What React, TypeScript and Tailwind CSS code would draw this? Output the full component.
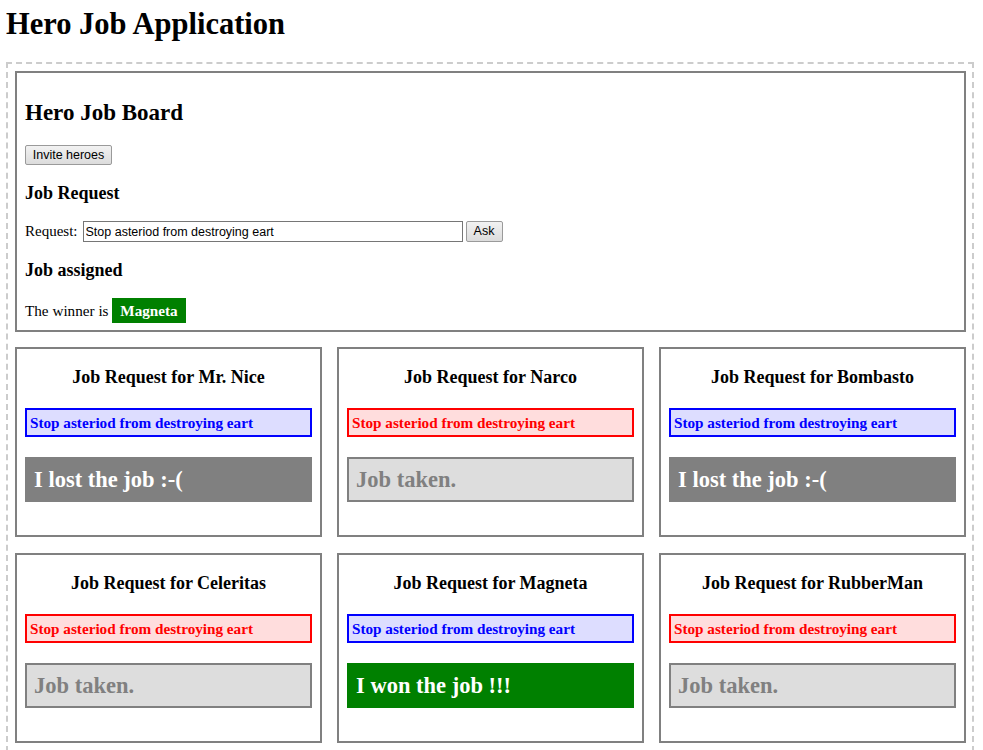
import React from "react";

type Hero = { name: string; lead: boolean; outcome: "lost" | "taken" | "won" };

const heroes: Hero[] = [
  { name: "Mr. Nice", lead: true, outcome: "lost" },
  { name: "Narco", lead: false, outcome: "taken" },
  { name: "Bombasto", lead: true, outcome: "lost" },
  { name: "Celeritas", lead: false, outcome: "taken" },
  { name: "Magneta", lead: true, outcome: "won" },
  { name: "RubberMan", lead: false, outcome: "taken" },
];

const REQ = "Stop asteriod from destroying eart";

function Card({ hero }: { hero: Hero }) {
  return (
    <div className="h-[190px] border-2 border-[#808080] px-[8px] pt-[8px]">
      <h3 className="mt-[10px] text-center text-[18px] font-bold leading-[20px]">
        Job Request for {hero.name}
      </h3>
      {hero.lead ? (
        <div className="mt-[21px] h-[29px] border-2 border-[#0000ff] bg-[#ddddff] pl-[3px] text-[15.2px] font-bold leading-[25px] text-[#0000ff]">
          {REQ}
        </div>
      ) : (
        <div className="mt-[21px] h-[29px] border-2 border-[#ff0000] bg-[#ffdddd] pl-[3px] text-[15.2px] font-bold leading-[25px] text-[#ff0000]">
          {REQ}
        </div>
      )}
      {hero.outcome === "lost" && (
        <div className="mt-[20px] h-[45px] bg-[#808080] pl-[9px] text-[22.5px] font-bold leading-[46px] text-white">
          I lost the job :-(
        </div>
      )}
      {hero.outcome === "won" && (
        <div className="mt-[20px] h-[45px] bg-[#008000] pl-[9px] text-[22.5px] font-bold leading-[46px] text-white">
          I won the job !!!
        </div>
      )}
      {hero.outcome === "taken" && (
        <div className="mt-[20px] h-[45px] border-2 border-[#808080] bg-[#dddddd] pl-[7px] text-[22.5px] font-bold leading-[42px] text-[#808080]">
          Job taken.
        </div>
      )}
    </div>
  );
}

export default function App() {
  return (
    <div className="min-h-screen bg-white font-['Liberation_Serif','Times_New_Roman',serif] text-black">
      <h1 className="ml-[6px] pt-[7px] text-[30.5px] font-bold leading-[34px]">Hero Job Application</h1>
      <div className="ml-[6px] mt-[21px] w-[968px] border-2 border-dashed border-[#cccccc] pb-[7px] pl-[7px] pr-[6px] pt-[7px]">
        <div className="border-2 border-[#808080] px-[8px] pb-[7px] pt-[8px]">
          <h2 className="mt-[19px] text-[23px] font-bold leading-[26px]">Hero Job Board</h2>
          <button className="mt-[19px] block h-[20px] w-[87px] rounded-[2px] border border-[#9a9a9a] bg-gradient-to-b from-[#f2f2f2] to-[#dcdcdc] p-0 font-['Liberation_Sans',Arial,sans-serif] text-[12.5px] leading-[18px] text-black">
            Invite heroes
          </button>
          <h3 className="mt-[18px] text-[18px] font-bold leading-[20px]">Job Request</h3>
          <div className="mt-[18px] flex h-[21px] items-center text-[15px]">
            <span className="mr-[5px] leading-[17px]">Request:</span>
            <input
              readOnly
              value={REQ}
              className="h-[21px] w-[380px] border border-[#767676] bg-white px-[2px] font-['Liberation_Sans',Arial,sans-serif] text-[12.5px] text-black outline-none"
            />
            <button className="ml-[3px] h-[21px] w-[37px] rounded-[2px] border border-[#9a9a9a] bg-gradient-to-b from-[#f2f2f2] to-[#dcdcdc] p-0 font-['Liberation_Sans',Arial,sans-serif] text-[12.5px] leading-[19px] text-black">
              Ask
            </button>
          </div>
          <h3 className="mt-[18px] text-[18px] font-bold leading-[20px]">Job assigned</h3>
          <div className="mt-[18px] h-[25px] text-[15.2px] leading-[25px]">
            The winner is{" "}
            <span className="inline-block h-[25px] bg-[#008000] px-[8px] font-bold leading-[25px] text-white">Magneta</span>
          </div>
        </div>
        <div className="mt-[15px] grid grid-cols-[307px_307px_307px] gap-x-[15px] gap-y-[16px]">
          {heroes.map((h) => (
            <Card key={h.name} hero={h} />
          ))}
        </div>
      </div>
    </div>
  );
}
